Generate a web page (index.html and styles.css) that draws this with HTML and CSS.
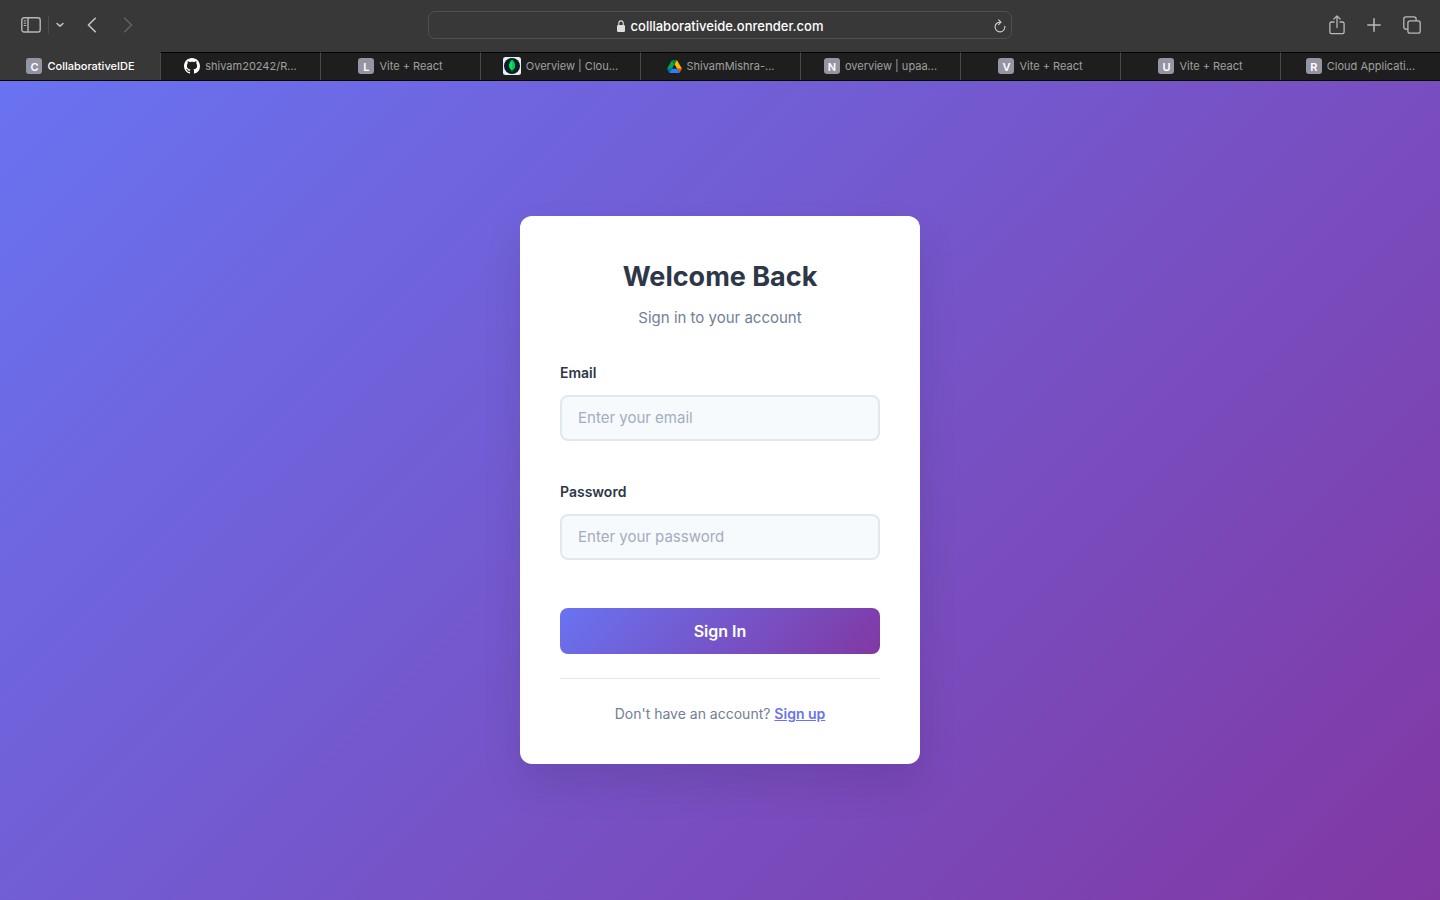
FILE: index.html
```html
<!DOCTYPE html>
<html lang="en">
<head>
    <meta charset="UTF-8">
    <meta name="viewport" content="width=device-width, initial-scale=1.0">
    <title>CollaborativeIDE</title>
    <link rel="stylesheet" href="styles.css">
</head>
<body>
    <header class="browser">
        <div class="toolbar">
            <div class="toolbar-left">
                <button class="icon-btn" type="button" aria-label="Sidebar">
                    <svg width="20" height="16" viewBox="0 0 20 16" fill="none" stroke="#b8b8b8" stroke-width="1.4">
                        <rect x="0.8" y="0.8" width="18.4" height="14.2" rx="2.2"/>
                        <path d="M7 1v14"/>
                        <path d="M2.8 3.9h2.4M2.8 6.2h2.4M2.8 8.5h2.4" stroke-width="1"/>
                    </svg>
                </button>
                <span class="divider"></span>
                <button class="icon-btn menu-btn" type="button" aria-label="Tab groups">
                    <svg width="8" height="6" viewBox="0 0 8 6" fill="none" stroke="#c4c4c4" stroke-width="1.5" stroke-linecap="round" stroke-linejoin="round"><path d="M1 1.5l3 2.6 3-2.6"/></svg>
                </button>
                <button class="icon-btn back-btn" type="button" aria-label="Back">
                    <svg width="10" height="16" viewBox="0 0 10 16" fill="none" stroke="#c4c4c4" stroke-width="1.6" stroke-linecap="round" stroke-linejoin="round"><path d="M8.3 1.3L1.4 8l6.9 6.7"/></svg>
                </button>
                <button class="icon-btn forward-btn" type="button" aria-label="Forward" disabled>
                    <svg width="10" height="16" viewBox="0 0 10 16" fill="none" stroke="#636363" stroke-width="1.6" stroke-linecap="round" stroke-linejoin="round"><path d="M1.7 1.3L8.6 8l-6.9 6.7"/></svg>
                </button>
            </div>
            <div class="address">
                <svg width="8" height="12" viewBox="0 0 8 12"><rect x="0" y="5" width="8" height="7" rx="1.2" fill="#dedede"/><path d="M1.8 5.4V3.3a2.2 2.4 0 0 1 4.4 0v2.1" fill="none" stroke="#dedede" stroke-width="1.1"/></svg>
                <span>colllaborativeide.onrender.com</span>
                <button class="icon-btn reload-btn" type="button" aria-label="Reload">
                    <svg width="12" height="14" viewBox="0 0 12 14" fill="none" stroke="#d0d0d0" stroke-width="1.1" stroke-linecap="round" stroke-linejoin="round"><path d="M10.8 7.2A4.9 4.9 0 1 1 6.2 3.1"/><path d="M4.6 .9l2.4 2.3-2.4 2.4"/></svg>
                </button>
            </div>
            <div class="toolbar-right">
                <button class="icon-btn" type="button" aria-label="Share">
                    <svg width="16" height="20" viewBox="0 0 16 20" fill="none" stroke="#b8b8b8" stroke-width="1.3" stroke-linecap="round" stroke-linejoin="round"><path d="M5 7H2.7A1.8 1.8 0 0 0 .9 8.8v8.1a1.8 1.8 0 0 0 1.8 1.8h10.6a1.8 1.8 0 0 0 1.8-1.8V8.8A1.8 1.8 0 0 0 13.3 7H11"/><path d="M8 12.5V1M4.9 4L8 .9 11.1 4"/></svg>
                </button>
                <button class="icon-btn" type="button" aria-label="New tab">
                    <svg width="14" height="14" viewBox="0 0 14 14" fill="none" stroke="#b8b8b8" stroke-width="1.5" stroke-linecap="round"><path d="M7 .8v12.4M.8 7h12.4"/></svg>
                </button>
                <button class="icon-btn" type="button" aria-label="Tab overview">
                    <svg width="18" height="18" viewBox="0 0 18 18" fill="none" stroke="#b8b8b8" stroke-width="1.3"><rect x="4.9" y="4.9" width="12.3" height="12.3" rx="2.2"/><path d="M4.9 13.1H3a2.2 2.2 0 0 1-2.2-2.2V3A2.2 2.2 0 0 1 3 .8h7.9A2.2 2.2 0 0 1 13.1 3v1.9"/></svg>
                </button>
            </div>
        </div>
        <nav class="tabs">
            <a class="tab active" href="#"><span class="letter">C</span>CollaborativeIDE</a>
            <a class="tab" href="#">
                <svg width="16" height="16" viewBox="0 0 16 16" fill="#fff"><path d="M8 0C3.58 0 0 3.58 0 8c0 3.54 2.29 6.53 5.47 7.59.4.07.55-.17.55-.38 0-.19-.01-.82-.01-1.49-2.01.37-2.53-.49-2.69-.94-.09-.23-.48-.94-.82-1.13-.28-.15-.68-.52-.01-.53.63-.01 1.08.58 1.23.82.72 1.21 1.87.87 2.33.66.07-.52.28-.87.51-1.07-1.78-.2-3.64-.89-3.64-3.95 0-.87.31-1.59.82-2.15-.08-.2-.36-1.02.08-2.12 0 0 .67-.21 2.2.82.64-.18 1.32-.27 2-.27s1.36.09 2 .27c1.53-1.04 2.2-.82 2.2-.82.44 1.1.16 1.92.08 2.12.51.56.82 1.27.82 2.15 0 3.07-1.87 3.75-3.65 3.95.29.25.54.73.54 1.48 0 1.07-.01 1.93-.01 2.2 0 .21.15.46.55.38A8.01 8.01 0 0 0 16 8c0-4.42-3.58-8-8-8z"/></svg>
                shivam20242/R...
            </a>
            <a class="tab" href="#"><span class="letter">L</span>Vite + React</a>
            <a class="tab" href="#">
                <svg width="18" height="18" viewBox="0 0 18 18"><rect width="18" height="18" rx="2.5" fill="#e9eeee"/><circle cx="9" cy="9" r="8" fill="#021e2b"/><path d="M9 2.8c2 2.1 3 3.9 3 5.9 0 1.9-1 3.3-2.6 4.4L9.2 15h-.4l-.2-1.9C7 12 6 10.6 6 8.7c0-2 1-3.8 3-5.9z" fill="#00e860"/><path d="M9 2.8c2 2.1 3 3.9 3 5.9 0 1.9-1 3.3-2.6 4.4L9 13z" fill="#00cc50"/></svg>
                Overview | Clou...
            </a>
            <a class="tab" href="#">
                <svg width="15" height="13" viewBox="0 0 87.3 78">
                    <path d="M6.6 66.85l3.85 6.65c.8 1.4 1.95 2.5 3.3 3.3L27.5 53H0c0 1.55.4 3.1 1.2 4.5z" fill="#0066da"/>
                    <path d="M43.65 25L29.9 1.2c-1.35.8-2.5 1.9-3.3 3.3L1.2 48.5A9 9 0 0 0 0 53h27.5z" fill="#00ac47"/>
                    <path d="M73.55 76.8c1.35-.8 2.5-1.9 3.3-3.3l1.6-2.75 7.65-13.25c.8-1.4 1.2-2.95 1.2-4.5H59.8l5.85 11.5z" fill="#ea4335"/>
                    <path d="M43.65 25L57.4 1.2C56.05.4 54.5 0 52.9 0H34.4c-1.6 0-3.15.45-4.5 1.2z" fill="#00832d"/>
                    <path d="M59.8 53H27.5L13.75 76.8c1.35.8 2.9 1.2 4.5 1.2h50.8c1.6 0 3.15-.45 4.5-1.2z" fill="#2684fc"/>
                    <path d="M73.4 26.5L60.7 4.5c-.8-1.4-1.95-2.5-3.3-3.3L43.65 25 59.8 53h27.45c0-1.55-.4-3.1-1.2-4.5z" fill="#ffba00"/>
                </svg>
                ShivamMishra-...
            </a>
            <a class="tab" href="#"><span class="letter">N</span>overview | upaa...</a>
            <a class="tab" href="#"><span class="letter">V</span>Vite + React</a>
            <a class="tab" href="#"><span class="letter">U</span>Vite + React</a>
            <a class="tab" href="#"><span class="letter">R</span>Cloud Applicati...</a>
        </nav>
    </header>

    <main class="login-page">
        <div class="login-card">
            <h1>Welcome Back</h1>
            <p class="subtitle">Sign in to your account</p>
            <form class="login-form">
                <div class="form-group">
                    <label for="email">Email</label>
                    <input type="email" id="email" placeholder="Enter your email">
                </div>
                <div class="form-group">
                    <label for="password">Password</label>
                    <input type="password" id="password" placeholder="Enter your password">
                </div>
                <button class="login-btn" type="submit">Sign In</button>
            </form>
            <div class="login-footer">Don't have an account? <a href="#">Sign up</a></div>
        </div>
    </main>
</body>
</html>
```
FILE: styles.css
```css
* {
    box-sizing: border-box;
}
body {
    margin: 0;
    min-height: 100vh;
    display: flex;
    flex-direction: column;
    font-family: Inter, "Liberation Sans", sans-serif;
}
button, input {
    font-family: inherit;
}

/* Browser bar */
.browser {
    background-color: #383838;
}
.toolbar {
    display: grid;
    grid-template-columns: 1fr 40.5% 1fr;
    align-items: center;
    height: 52px;
    padding-bottom: 2px;
}
.toolbar-left,
.toolbar-right {
    display: flex;
    align-items: center;
}
.toolbar-left {
    padding-left: 21px;
}
.toolbar-right {
    justify-content: flex-end;
    gap: 22px;
    padding-right: 19px;
}
.icon-btn {
    display: flex;
    padding: 0;
    border: none;
    background: none;
    cursor: pointer;
}
.divider {
    width: 1px;
    height: 18px;
    margin-left: 7px;
    background-color: #4a4a4a;
}
.menu-btn {
    margin-left: 7px;
}
.back-btn {
    margin-left: 23px;
}
.forward-btn {
    margin-left: 26px;
}
.address {
    position: relative;
    display: flex;
    align-items: center;
    justify-content: center;
    gap: 6px;
    height: 28px;
    padding-top: 2px;
    border: 1px solid #505050;
    border-radius: 7px;
    color: #fff;
    font-size: 13px;
    font-weight: 500;
}
.reload-btn {
    position: absolute;
    right: 5px;
}

/* Tabs */
.tabs {
    display: flex;
    border-bottom: 1px solid #000;
}
.tab {
    flex: 1;
    display: flex;
    align-items: center;
    justify-content: center;
    gap: 5px;
    height: 28px;
    padding-bottom: 1px;
    border-top: 1px solid #000;
    border-left: 1px solid #4a4a4a;
    background-color: #1e1e1e;
    color: #a0a0a0;
    font-size: 11px;
    text-decoration: none;
    white-space: nowrap;
}
.tab.active {
    border-color: #383838;
    background-color: #383838;
    color: #fff;
    font-weight: 500;
}
.letter {
    width: 16px;
    height: 16px;
    border-radius: 3px;
    background-color: #9494a3;
    color: #fff;
    font-size: 11px;
    font-weight: 600;
    line-height: 18px;
    text-align: center;
}

/* Login */
.login-page {
    flex: 1;
    display: flex;
    align-items: center;
    justify-content: center;
    padding: 20px 20px 22px;
    background: linear-gradient(135deg, #6973f1 0%, #8138a3 100%);
}
.login-card {
    width: 100%;
    max-width: 400px;
    padding: 40px;
    border-radius: 12px;
    background-color: #fff;
    box-shadow: 0 20px 40px rgba(0, 0, 0, 0.1);
}
h1 {
    margin: 0 0 8px;
    color: #2d3748;
    font-size: 27px;
    font-weight: 700;
    line-height: 42px;
    text-align: center;
}
.subtitle {
    margin: 0 0 32px;
    color: #718096;
    font-size: 15px;
    line-height: 24px;
    text-align: center;
}
.form-group {
    margin-bottom: 40px;
}
.form-group label {
    display: block;
    margin-bottom: 12px;
    color: #2d3748;
    font-size: 14px;
    font-weight: 600;
    line-height: 21px;
}
.form-group input {
    display: block;
    width: 100%;
    height: 46px;
    padding: 0 16px;
    border: 2px solid #e1e7f1;
    border-radius: 8px;
    background-color: #f7fafc;
    color: #2d3748;
    font-size: 15px;
}
.form-group input::placeholder {
    color: #a0aec0;
}
.login-btn {
    width: 100%;
    height: 46px;
    margin-top: 8px;
    border: none;
    border-radius: 8px;
    background: linear-gradient(135deg, #6973f1 0%, #8138a3 100%);
    color: #fff;
    font-size: 16px;
    font-weight: 600;
    cursor: pointer;
}
.login-footer {
    margin-top: 24px;
    padding-top: 24px;
    border-top: 1px solid #e1e7f1;
    color: #718096;
    font-size: 14px;
    line-height: 21px;
    text-align: center;
}
.login-footer a {
    color: #6973f1;
    font-weight: 600;
}
```
